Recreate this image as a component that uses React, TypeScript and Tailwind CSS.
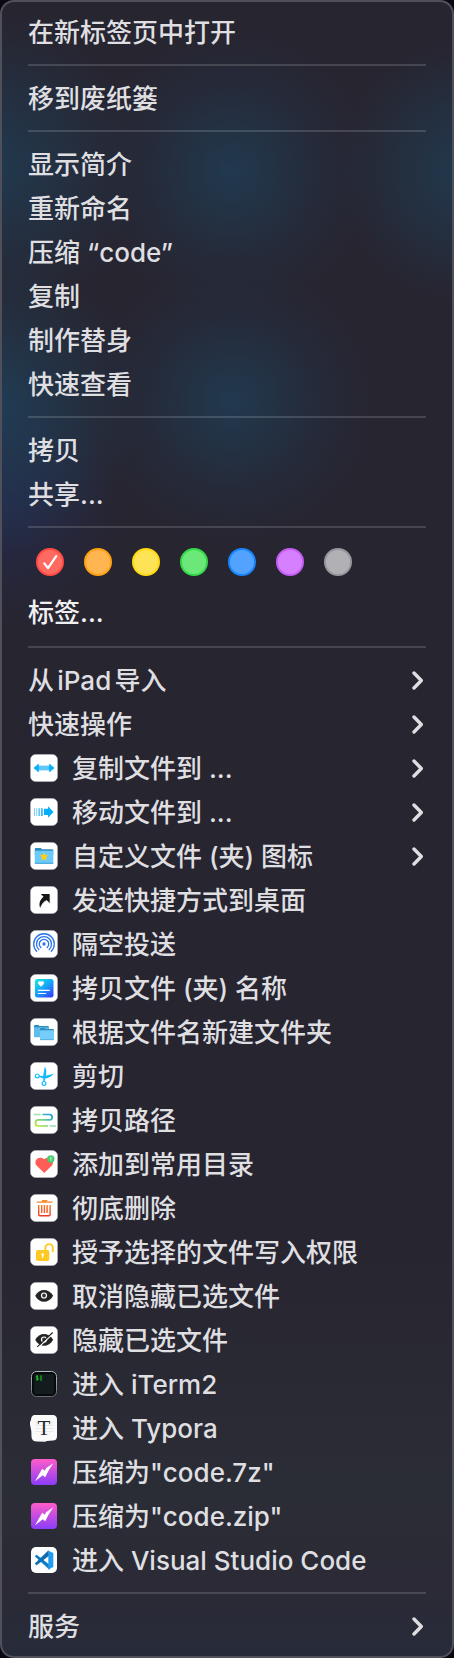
import React from "react";

type IconName =
  | "copyTo" | "moveTo" | "folderStar" | "shortcut" | "airdrop" | "card" | "folders" | "scissors" | "path"
  | "heart" | "trash" | "unlock" | "eye" | "eyeOff" | "iterm" | "typora" | "archive" | "vscode";

type Item = { label: string; icon?: IconName; submenu?: boolean };

const topGroups: Item[][] = [
  [{ label: "在新标签页中打开" }],
  [{ label: "移到废纸篓" }],
  [
    { label: "显示简介" },
    { label: "重新命名" },
    { label: "压缩 “code”" },
    { label: "复制" },
    { label: "制作替身" },
    { label: "快速查看" },
  ],
  [{ label: "拷贝" }, { label: "共享..." }],
];

const actions: Item[] = [
  { label: "从iPad导入", submenu: true },
  { label: "快速操作", submenu: true },
  { label: "复制文件到 ...", icon: "copyTo", submenu: true },
  { label: "移动文件到 ...", icon: "moveTo", submenu: true },
  { label: "自定义文件 (夹) 图标", icon: "folderStar", submenu: true },
  { label: "发送快捷方式到桌面", icon: "shortcut" },
  { label: "隔空投送", icon: "airdrop" },
  { label: "拷贝文件 (夹) 名称", icon: "card" },
  { label: "根据文件名新建文件夹", icon: "folders" },
  { label: "剪切", icon: "scissors" },
  { label: "拷贝路径", icon: "path" },
  { label: "添加到常用目录", icon: "heart" },
  { label: "彻底删除", icon: "trash" },
  { label: "授予选择的文件写入权限", icon: "unlock" },
  { label: "取消隐藏已选文件", icon: "eye" },
  { label: "隐藏已选文件", icon: "eyeOff" },
  { label: "进入 iTerm2", icon: "iterm" },
  { label: "进入 Typora", icon: "typora" },
  { label: '压缩为"code.7z"', icon: "archive" },
  { label: '压缩为"code.zip"', icon: "archive" },
  { label: "进入 Visual Studio Code", icon: "vscode" },
];

const tags = [
  { name: "红色", style: "bg-[#ff6b63] border-[#ff4b42]", checked: true },
  { name: "橙色", style: "bg-[#ffb550] border-[#ffa011]" },
  { name: "黄色", style: "bg-[#ffe356] border-[#ffd90f]" },
  { name: "绿色", style: "bg-[#6ce878] border-[#33d94b]" },
  { name: "蓝色", style: "bg-[#54a2ff] border-[#1686ff]" },
  { name: "紫色", style: "bg-[#d780ff] border-[#c55cf6]" },
  { name: "灰色", style: "bg-[#b1b0b5] border-[#98979d]" },
];

const EYE = "M5.2 13.8C7.5 10 10.5 8 14 8s6.8 2 9.2 5.800C20.800 17.800 17.600 19.800 14 19.800S7.500 17.800 5.200 13.800z";

const drawings: Record<IconName, React.ReactNode> = {
  copyTo: (
    <>
      <path d="M8 11.600h12v4.800H8z" fill="#62c6fb" />
      <path d="M3.800 14 8.600 10v8zM24.200 14l-4.800-4v8z" fill="#06b0fa" stroke="#06b0fa" strokeWidth=".6" strokeLinejoin="round" />
    </>
  ),
  moveTo: (
    <>
      <path d="M4 10.200h1v7.800H4zM6.200 10.200h1v7.800h-1z" fill="#7fcffb" />
      <path d="M8.500 10.200h1.300v7.800H8.500zM11 10.200h1.800v7.800H11z" fill="#3dbcfb" />
      <path d="M14 10.800h4V8.300l5.600 5.700-5.600 5.700V17h-4z" fill="#06b0fa" />
    </>
  ),
  folderStar: (
    <>
      <path d="M4.800 7q0-1 1-1h5l1.200 1.200h10.300q1 0 1 1V13H4.800z" fill="#2f8dbd" />
      <rect x="4.800" y="8.700" width="18.500" height="13" rx=".8" fill="#6acbfa" />
      <path d="M4.800 21.300h18.500" stroke="#3b9dcd" strokeWidth=".9" />
      <path d="m14 10.200 1.300 2.800 3 .3-2.200 2.100.6 3-2.700-1.500-2.700 1.500.6-3-2.200-2.100 3-.3z" fill="#ffcc18" />
    </>
  ),
  shortcut: (
    <>
      <path d="M11.200 8.500h9v9.200l-3-3c-3.300 1.500-5.400 4-6.700 8-1.200-4.500.5-8.700 3.600-11.300z" fill="#cfcfcf" />
      <path d="M10.800 7.900h8.800v9l-3-3c-3.200 1.500-5.200 4-6.500 7.900-1.600-4.500.2-8.500 3.500-11z" fill="#161616" />
    </>
  ),
  airdrop: (
    <g fill="none" stroke="#2a73ee" strokeWidth="1.300" strokeLinecap="round">
      <path d="M6.700 21.300a10.300 10.300 0 1 1 14.600 0" />
      <path d="M8.800 19.500a7.500 7.500 0 1 1 10.400 0" />
      <path d="M10.800 17.500a4.700 4.700 0 1 1 6.400 0" />
      <circle cx="14" cy="14" r="1" fill="#2a73ee" />
    </g>
  ),
  card: (
    <>
      <rect x="5" y="5" width="18.500" height="18.500" rx="2.200" fill="url(#card-fill)" />
      <path d="M11 12.500 8.500 10a1.500 1.500 0 0 1 2.500-2 1.500 1.500 0 0 1 2.500 2z" fill="#fff" stroke="#fff" strokeWidth=".4" />
      <path d="M8.400 16.300h11M8.400 19.500h7.200" stroke="#fff" strokeWidth="1.200" strokeLinecap="round" />
    </>
  ),
  folders: (
    <>
      <path d="M4 8q0-1 1-1h3.500l1 1H18q.8 0 .8.800V12H4z" fill="#2f8dbd" />
      <path d="M4 9.200h14.800v10H4.800q-.8 0-.8-.8z" fill="#5fbdec" />
      <path d="M10 11q0-1 1-1h3.500l1 1h7.500q1 0 1 1v3H10z" fill="#2f8dbd" />
      <rect x="10" y="12.200" width="14" height="9.800" rx=".8" fill="#74cdfb" />
      <path d="M10.300 21.700h13.400" stroke="#429fcb" strokeWidth=".7" />
    </>
  ),
  scissors: (
    <g fill="none" stroke="#12bbfd">
      <circle cx="7.300" cy="13.900" r="1.900" strokeWidth="1.200" />
      <circle cx="14" cy="21.400" r="1.900" strokeWidth="1.200" />
      <path d="M9.200 13.700 13.500 14.200 24 11.800Q19 17 13.500 16.500L9.200 15zM13.500 19.500 13 14.500 14.800 4.600Q17.400 9 15.600 14.500L14.700 19.500z" fill="#12bbfd" stroke="none" />
    </g>
  ),
  path: (
    <g fill="none" strokeWidth="1.500">
      <path d="M3.700 8.500h7M19.500 20h6.500" stroke="#9be0ad" />
      <path d="M12.300 8.500h7.200a2.700 2.700 0 0 1 0 5.400H8.500a3 3 0 0 0 0 6.100H18" stroke="url(#path-fill)" strokeWidth="1.700" />
    </g>
  ),
  heart: (
    <>
      <path d="M14.200 23 6.700 15.800C2.800 11.400 8.200 4.800 14.200 9.300c6-4.500 11.400 2.100 7.500 6.500z" fill="#ff5d56" />
      <circle cx="20.800" cy="9" r="3.700" fill="#48ce70" />
      <path d="M20.800 7v4M20 8h1.600" stroke="#b8f5c8" strokeWidth=".9" />
    </>
  ),
  trash: (
    <g fill="none" stroke="url(#trash-fill)" strokeWidth="1.400">
      <path d="M6.700 8.100H22v.1M12 6.700h4.800v.1" />
      <path d="M8.700 11v9.500q0 1.200 1.200 1.200h9q1.200 0 1.200-1.200V11M11.700 11v7.700l.1.100M14.400 11v7.700l.1.100M17.100 11v7.700l.1.100" />
    </g>
  ),
  unlock: (
    <>
      <rect x="6" y="12" width="13.300" height="11" rx="1.800" fill="#fec922" />
      <path d="M15.400 12V9.800a3.700 3.700 0 0 1 7.400 0v3.400" fill="none" stroke="#fec922" strokeWidth="1.900" strokeLinecap="round" />
      <circle cx="12.700" cy="16.500" r="1.300" fill="#fff" />
      <path d="M12.700 17v2.500" stroke="#fff" strokeWidth="1.200" strokeLinecap="round" />
    </>
  ),
  eye: (
    <>
      <path d={EYE} fill="#242424" />
      <circle cx="14" cy="13.500" r="2.500" fill="#333" stroke="#fff" strokeWidth="1.200" />
    </>
  ),
  eyeOff: (
    <>
      <path d={EYE} fill="#242424" />
      <circle cx="14" cy="13.500" r="2.500" fill="#333" stroke="#fff" strokeWidth="1.200" />
      <path d="M23.200 7.500 8 21.700" stroke="#fff" strokeWidth="1.200" />
      <path d="M22.700 6.500 7.200 20.900" stroke="#242424" strokeWidth="1.100" />
    </>
  ),
  iterm: (
    <>
      <rect x="1.500" y="1.500" width="25" height="25" rx="5" fill="#050708" stroke="url(#term-rim)" />
      <rect x="3.800" y="3.800" width="20.400" height="20.400" rx="2.500" fill="#121b1e" />
      <path d="M8.200 6.100H6.400v1.800h1.700v1.800H6M7.200 5.200v5.400" fill="none" stroke="#1bc72b" strokeWidth=".9" />
      <path d="M9.900 5.300h2.200v5.500H9.900z" fill="#127d1b" />
    </>
  ),
  typora: (
    <>
      <path d="M4 1h18.500Q27 1 27 5.500V22q0 4.500-4 4.500l-6 .5-2 .7-8-.1Q2 27.500 1.500 23L1.300 17 0 10.500V8l1-2Q1 2 4 1z" fill="#fafafa" />
      <path d="M5.500 8.500h18M5.500 11.500h18M5.500 14.500h18M5.500 17.500h18" stroke="#e5e5e5" strokeWidth=".8" />
      <text x="14" y="21" textAnchor="middle" fontSize="21" fontWeight="400" fontFamily="Liberation Serif, serif" fill="#2b2b2b">T</text>
    </>
  ),
  archive: (
    <>
      <rect x="1" y="1" width="26" height="26" rx="4" fill="url(#archive-fill)" />
      <path d="M23.300 5.300 16 10.300 14.800 12.700 12.200 10.800 5 23.200 12.800 17.200 15.200 19.200 18.200 13.200z" fill="#fff" />
    </>
  ),
  vscode: (
    <>
      <rect x="1" y="1" width="26" height="26" rx="5" fill="#fdfdfd" />
      <path d="M5 10.300 6.600 9l12.700 9.800v4.500z" fill="#0b7cc8" stroke="#0b7cc8" strokeWidth=".5" />
      <path d="M5 17.600 6.600 19l12.700-9.700-1-4.600z" fill="#0b6cb0" stroke="#0b6cb0" strokeWidth=".5" />
      <path d="M17.800 4.800h.8l4.700 2.300v13.800l-4.700 2.300h-.8l.5-1.200V6z" fill="#239cee" />
    </>
  ),
};

const bare: IconName[] = ["iterm", "typora", "archive", "vscode"];

function ItemIcon({ name }: { name: IconName }) {
  return (
    <svg viewBox="0 0 28 28" className="size-7 shrink-0" aria-hidden="true">
      {!bare.includes(name) && <rect x=".3" y=".3" width="27.400" height="27.400" rx="5.500" fill="#fff" stroke="#8d8c94" strokeWidth=".6" />}
      {drawings[name]}
    </svg>
  );
}

function Chevron() {
  return (
    <svg viewBox="0 0 12 20" className="ml-auto h-5 w-3 shrink-0" fill="none" stroke="#dedee0" strokeWidth="3.400" strokeLinecap="round" strokeLinejoin="round" aria-hidden="true">
      <path d="M2 3 9.300 10.500 2 18" />
    </svg>
  );
}

function MenuItem({ item }: { item: Item }) {
  return (
    <button
      type="button"
      role="menuitem"
      aria-haspopup={item.submenu ? "menu" : undefined}
      className={`flex h-11 w-full items-center gap-3.5 pr-0.5 text-left whitespace-nowrap ${item.icon ? "pl-0.5" : ""}`}
    >
      {item.icon && <ItemIcon name={item.icon} />}
      <span className="pt-0.5">{item.label}</span>
      {item.submenu && <Chevron />}
    </button>
  );
}

function Separator() {
  return <hr className="my-2.5 h-0.5 border-0 bg-white/15" />;
}

function Gradients() {
  return (
    <svg width="0" height="0" className="absolute" aria-hidden="true">
      <defs>
        <linearGradient id="card-fill" x1="0" y1="0" x2=".8" y2="1">
          <stop offset="0" stopColor="#12efd6" />
          <stop offset=".5" stopColor="#16a9fb" />
          <stop offset="1" stopColor="#3346fb" />
        </linearGradient>
        <linearGradient id="path-fill" x1="0" y1="1" x2="1" y2="0">
          <stop offset="0" stopColor="#c5e625" />
          <stop offset=".5" stopColor="#6bcf8b" />
          <stop offset="1" stopColor="#149ce6" />
        </linearGradient>
        <linearGradient id="trash-fill" gradientUnits="userSpaceOnUse" x1="0" y1="6" x2="0" y2="22">
          <stop offset="0" stopColor="#f8922c" />
          <stop offset="1" stopColor="#f2381c" />
        </linearGradient>
        <linearGradient id="term-rim" x1="0" y1="0" x2="0" y2="1">
          <stop offset="0" stopColor="#b4c0c4" />
          <stop offset="1" stopColor="#6b6f73" />
        </linearGradient>
        <linearGradient id="archive-fill" x1="0" y1="0" x2="0" y2="1">
          <stop offset="0" stopColor="#ff5cc9" />
          <stop offset="1" stopColor="#8a3dfb" />
        </linearGradient>
      </defs>
    </svg>
  );
}

export default function App() {
  return (
    <div className="bg-[#0a0911] font-['Inter','Noto_Sans_CJK_SC',sans-serif] text-[26px] leading-8 font-medium text-[#dfdfe1] [text-autospace:normal]">
      <Gradients />
      <div
        role="menu"
        className="rounded-[14px] border-2 border-[#50505b] bg-[#272530] bg-[radial-gradient(circle_140px_at_230px_170px,#21394f,#23304480_60%,transparent),radial-gradient(circle_150px_at_-10px_165px,#21394f,transparent),radial-gradient(circle_130px_at_465px_170px,#21394f,transparent),radial-gradient(circle_140px_at_230px_400px,#21394f,#23304480_60%,transparent),radial-gradient(circle_150px_at_-10px_405px,#203d55,transparent),radial-gradient(circle_120px_at_0px_500px,#25294a,transparent),linear-gradient(#272530_75%,#2b2d36_90%,#2b2a36_96%,#272b39)] px-[26px] py-2"
      >
        {topGroups.map((group) => (
          <React.Fragment key={group[0].label}>
            {group.map((item) => (
              <MenuItem key={item.label} item={item} />
            ))}
            <Separator />
          </React.Fragment>
        ))}
        <div className="flex gap-5 px-2 pt-2.5 pb-3.5">
          {tags.map((tag) => (
            <button
              key={tag.name}
              type="button"
              role="menuitemcheckbox"
              aria-label={tag.name}
              aria-checked={!!tag.checked}
              className={`flex size-7 items-center justify-center rounded-full border-2 ${tag.style}`}
            >
              {tag.checked && (
                <svg viewBox="0 0 24 24" className="size-6 shrink-0" fill="none" stroke="#fff" strokeWidth="2.200" strokeLinecap="round" strokeLinejoin="round" aria-hidden="true">
                  <path d="M6.300 13.300 10 18.200 18.200 6.200" />
                </svg>
              )}
            </button>
          ))}
        </div>
        <div className="pb-0.5 text-[#f0f0f2]">
          <MenuItem item={{ label: "标签..." }} />
        </div>
        <Separator />
        {actions.map((item) => (
          <MenuItem key={item.label} item={item} />
        ))}
        <Separator />
        <MenuItem item={{ label: "服务", submenu: true }} />
      </div>
    </div>
  );
}
